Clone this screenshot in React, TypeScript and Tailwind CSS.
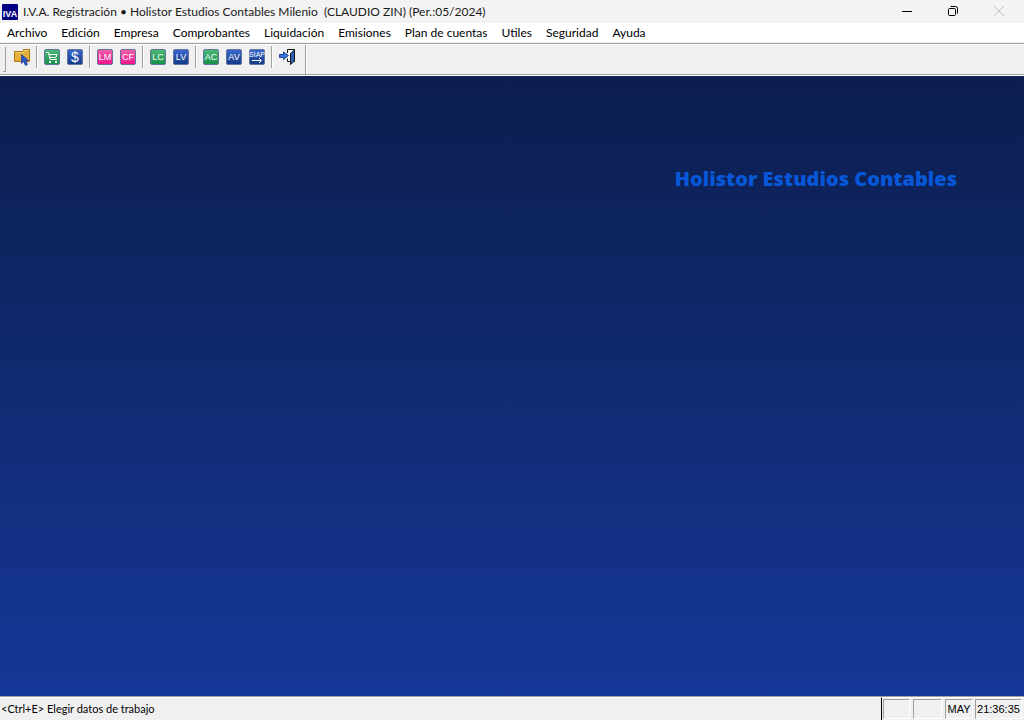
import React from "react";

const menus = [
  "Archivo", "Edición", "Empresa", "Comprobantes", "Liquidación",
  "Emisiones", "Plan de cuentas", "Utiles", "Seguridad", "Ayuda",
];

type Tone = "green" | "blue" | "pink";

const tones: Record<Tone, [string, string]> = {
  green: ["#4cb878", "#149048"],
  blue: ["#3a68d0", "#123a86"],
  pink: ["#f060a8", "#f0148c"],
};

function Tile({ tone, children }: { tone: Tone; children: React.ReactNode }) {
  const [top, bottom] = tones[tone];
  return (
    <svg width="16" height="16" viewBox="0 0 16 16" aria-hidden="true">
      <defs>
        <linearGradient id={`tile-${tone}`} x1="0" y1="0" x2="0" y2="1">
          <stop offset="0" stopColor={top} />
          <stop offset="1" stopColor={bottom} />
        </linearGradient>
      </defs>
      <rect x="0.5" y="0.5" width="15" height="15" rx="1.5" fill={`url(#tile-${tone})`} stroke="#64749a" />
      {children}
    </svg>
  );
}

function Letters({ value, size = 9, y = 11 }: { value: string; size?: number; y?: number }) {
  return (
    <text x="8" y={y} textAnchor="middle" fill="#ffffff" fontSize={size} fontFamily="'Liberation Sans', sans-serif">
      {value}
    </text>
  );
}

function FolderIcon() {
  return (
    <svg width="17" height="17" viewBox="0 0 17 17" aria-hidden="true">
      <path d="M.5 12.500V2.500H9.500V.5H15.500V12.500Z" fill="#e6ae3c" stroke="#a87818" />
      <path d="M1 3.500H10V1.500H15" fill="none" stroke="#f4cc68" />
      <path d="M7.500 5.500V14.500L9.500 12.500L11.500 16.500L13.500 15.500L12 11.500H14.500L7.500 5.500Z" fill="#2858c8" stroke="#1c3e92" strokeWidth=".7" />
    </svg>
  );
}

function ExitIcon() {
  return (
    <svg width="17" height="16" viewBox="0 0 17 16" aria-hidden="true">
      <path d="M8.500 4V.5H15.500V12.500H8.500V9.500" fill="#fff" stroke="#111" />
      <path d="M11.500 4.500L15.500 1V12L11.500 15.500Z" fill="#2c62b8" stroke="#111" />
      <path d="M.5 5.500H4.500V3L9.500 6.500L4.500 10.500V8.500H.5Z" fill="#3a74dc" stroke="#204a9c" />
    </svg>
  );
}

function Tool({ label, children }: { label: string; children: React.ReactNode }) {
  return (
    <button type="button" aria-label={label} className="flex h-6 w-[23px] items-center pl-[3px]">
      {children}
    </button>
  );
}

function Divider() {
  return <span className="mr-[3px] ml-[2px] h-[22px] w-[2px] border-l border-r border-l-[#a0a0a0] border-r-white" />;
}

function Panel({ className, children }: { className: string; children?: React.ReactNode }) {
  return (
    <span className={`flex h-5 items-center justify-center border border-t-[#a0a0a0] border-r-white border-b-white border-l-[#a0a0a0] ${className}`}>
      {children}
    </span>
  );
}

export default function App() {
  return (
    <div className="flex min-h-screen flex-col bg-[#f0f0f0] font-['Lato','Open_Sans',sans-serif] text-[12px] text-black">
      <header className="flex h-[23px] items-center bg-[#f3f3f3] pr-[2px] pl-[2px]">
        <svg width="16" height="16" viewBox="0 0 16 16" aria-hidden="true">
          <rect width="16" height="16" rx="1" fill="#000080" />
          <text x="8" y="13" textAnchor="middle" fill="#fff" fontSize="9" fontWeight="700" fontFamily="'Liberation Sans', sans-serif">IVA</text>
        </svg>
        <h1 className="ml-[5px] flex-1 whitespace-pre text-[#1a1a1a]">
          I.V.A. Registración • Holistor Estudios Contables Milenio  (CLAUDIO ZIN) (Per.:05/2024)
        </h1>
        <button type="button" aria-label="Minimizar" className="flex h-5 w-[46px] items-center justify-center">
          <svg width="10" height="10" viewBox="0 0 10 10"><path d="M0 4.500H10" stroke="#000" /></svg>
        </button>
        <button type="button" aria-label="Restaurar" className="flex h-5 w-[46px] items-center justify-center pb-[2px]">
          <svg width="10" height="10" viewBox="0 0 10 10" fill="none" stroke="#000">
            <rect x=".5" y="2.500" width="7" height="7" rx="1" />
            <path d="M2.500 .5H7.500Q9.500 .5 9.500 2.500V7.500" />
          </svg>
        </button>
        <button type="button" aria-label="Cerrar" disabled className="flex h-5 w-[46px] items-center justify-center pb-[2px]">
          <svg width="10" height="10" viewBox="0 0 10 10"><path d="M0 0L10 10M10 0L0 10" stroke="#c0c0c0" /></svg>
        </button>
      </header>

      <nav aria-label="Principal" className="flex h-[19px] items-center bg-white">
        {menus.map((name) => (
          <button key={name} type="button" className="px-[7px] whitespace-nowrap">{name}</button>
        ))}
      </nav>

      <div className="mt-px flex h-[33px] border-t border-b border-t-[#a0a0a0] border-b-white">
        <div className="flex flex-1 border-t border-b border-t-white border-b-[#a0a0a0]">
          <div role="toolbar" aria-label="Herramientas" className="flex h-6 items-center">
            <span className="mt-[2px] mr-[5px] ml-[3px] h-[25px] w-[3px] self-start border-r border-b border-[#a0a0a0]" />
            <Tool label="Elegir datos de trabajo"><FolderIcon /></Tool>
            <Divider />
            <Tool label="Compras">
              <Tile tone="green">
                <path d="M2 3.500H4.500L6 10.500H13M5 5.500H13L12 8.500H6" fill="none" stroke="#fff" />
                <rect x="5" y="12" width="2" height="2" fill="#fff" />
                <rect x="11" y="12" width="2" height="2" fill="#fff" />
              </Tile>
            </Tool>
            <Tool label="Ventas"><Tile tone="blue"><Letters value="$" size={14} y={13} /></Tile></Tool>
            <Divider />
            <Tool label="LM"><Tile tone="pink"><Letters value="LM" /></Tile></Tool>
            <Tool label="CF"><Tile tone="pink"><Letters value="CF" /></Tile></Tool>
            <Divider />
            <Tool label="LC"><Tile tone="green"><Letters value="LC" /></Tile></Tool>
            <Tool label="LV"><Tile tone="blue"><Letters value="LV" /></Tile></Tool>
            <Divider />
            <Tool label="AC"><Tile tone="green"><Letters value="AC" /></Tile></Tool>
            <Tool label="AV"><Tile tone="blue"><Letters value="AV" /></Tile></Tool>
            <Tool label="SIAP">
              <Tile tone="blue">
                <Letters value="SIAP" size={7} y={8} />
                <path d="M3 11.500H12M10 9L12.500 11.500L10 14" fill="none" stroke="#fff" />
              </Tile>
            </Tool>
            <Divider />
            <Tool label="Salir"><ExitIcon /></Tool>
          </div>
          <span className="ml-[6px] w-[2px] border-l border-r border-l-[#a0a0a0] border-r-white" />
        </div>
      </div>

      <main className="flex-1 bg-linear-to-b from-[#0c1e4e] to-[#153798] pt-[88px] pr-[67px] text-right">
        <p className="font-['Open_Sans','Noto_Sans',sans-serif] text-[20px] leading-[30px] font-extrabold text-[#0758d8]">
          Holistor Estudios Contables
        </p>
      </main>

      <footer className="flex h-6 items-center border-t border-t-[#a0a0a0] text-[11px]">
        <div className="flex h-full flex-1 items-center border-t border-white pl-px">{"<Ctrl+E> Elegir datos de trabajo"}</div>
        <div className="flex h-full items-center gap-[2px] border-t border-l border-t-white border-l-black pr-[2px] pl-px font-['Liberation_Sans',Arial,sans-serif]">
          <Panel className="w-[27px]" />
          <Panel className="ml-px w-[29px]" />
          <Panel className="ml-px w-[28px]">MAY</Panel>
          <Panel className="w-[47px]">21:36:35</Panel>
        </div>
      </footer>
    </div>
  );
}
